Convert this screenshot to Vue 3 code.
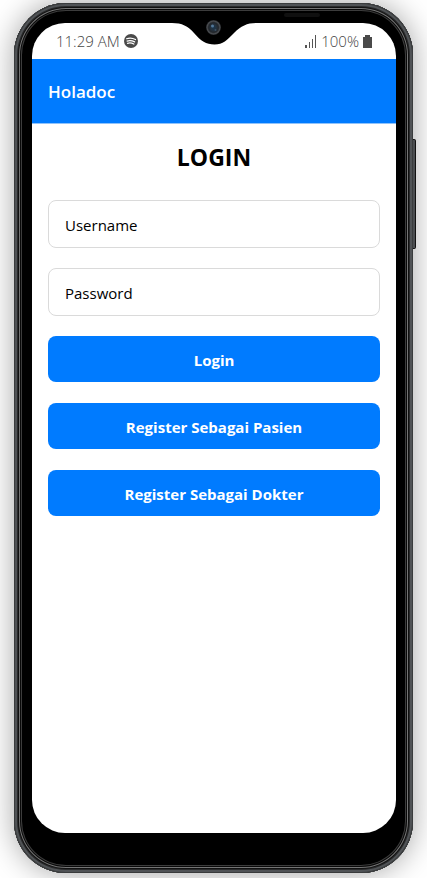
<script setup>
import { ref } from 'vue'

const username = ref('')
const password = ref('')
</script>

<template>
  <div class="stage">
    <div class="phone">
      <span class="side-key"></span>
      <span class="speaker"></span>
      <svg class="notch" viewBox="0 0 84 36" aria-hidden="true">
        <defs>
          <radialGradient id="lens">
            <stop offset="0" stop-color="#16334d" />
            <stop offset="0.35" stop-color="#24323f" />
            <stop offset="0.65" stop-color="#22262b" />
            <stop offset="0.85" stop-color="#4a4d51" />
            <stop offset="1" stop-color="#25272a" />
          </radialGradient>
        </defs>
        <path d="M0 10H84V13C75 13 69 16 62 23C55 30 51 34.500 42.500 34.500C34 34.500 29 31 22 23C16 16 10 13 0 13Z" fill="#000" />
        <circle cx="41.500" cy="17.500" r="7.500" fill="url(#lens)" />
        <circle cx="40.500" cy="16" r="1.500" fill="#54799a" />
        <circle cx="43.500" cy="20" r="1" fill="#3c5266" />
      </svg>
      <div class="screen">
        <div class="status">
          <div class="status-group">
            <span>11:29 AM</span>
            <svg class="spotify" viewBox="0 0 14 14" aria-hidden="true">
              <circle cx="7" cy="7" r="7" fill="#4a4a4a" />
              <path d="M2.600 4.700C5.400 3.800 8.800 4.100 11.500 5.600M3.100 7.100C5.600 6.400 8.300 6.700 10.600 7.900M3.500 9.300C5.600 8.700 7.900 9 9.800 10.100" fill="none" stroke="#fff" stroke-width="1.200" stroke-linecap="round" />
            </svg>
          </div>
          <div class="status-group">
            <svg class="signal" viewBox="0 0 12 13" aria-hidden="true">
              <path d="M0 10H2V13H0ZM4 7H5V13H4ZM7 4H8V13H7ZM10 0H11V13H10Z" fill="#555" />
            </svg>
            <span>100%</span>
            <svg class="battery" viewBox="0 0 9 13" aria-hidden="true">
              <path d="M2 0H7V2H9V13H0V2H2Z" fill="#4a4a4a" />
            </svg>
          </div>
        </div>
        <header class="bar">Holadoc</header>
        <form class="form" @submit.prevent>
          <h1>LOGIN</h1>
          <div class="fields">
            <input v-model="username" type="text" placeholder="Username" aria-label="Username" />
            <input v-model="password" type="password" placeholder="Password" aria-label="Password" />
          </div>
          <div class="actions">
            <button type="submit">Login</button>
            <button type="button">Register Sebagai Pasien</button>
            <button type="button">Register Sebagai Dokter</button>
          </div>
        </form>
      </div>
    </div>
  </div>
</template>

<style>
body {
  background: #fff;
}
</style>

<style scoped>
.stage {
  box-sizing: border-box;
  min-height: 100vh;
  margin-right: 3px;
  padding: 3px 14px 5px;
  overflow: hidden;
  background: #fff;
  font-family: "Segoe UI", "Open Sans", "Noto Sans", sans-serif;
}

.phone {
  position: relative;
  box-sizing: border-box;
  display: flex;
  min-height: calc(100vh - 8px);
  padding: 20px 17px 40px 18px;
  border-radius: 52px;
  background: #000;
  box-shadow:
    inset 0 0 0 1px #3a3c3d,
    inset 0 0 0 3px #505356,
    inset 0 0 0 4px #2a2b2c,
    inset 0 0 0 5px #111,
    inset 0 0 0 6px #747474,
    inset 0 0 0 7px #090909,
    inset 0 0 0 8px #3c3c3c,
    0 0 30px rgba(0, 0, 0, 0.36);
}

.side-key {
  position: absolute;
  top: 136px;
  right: -3px;
  width: 3px;
  height: 110px;
  box-sizing: border-box;
  border: 1px solid #111;
  border-left: 0;
  border-radius: 0 2px 2px 0;
  background: #4b4d50;
}

.speaker {
  position: absolute;
  top: 10px;
  right: 93px;
  width: 36px;
  height: 4px;
  border-radius: 2px;
  background: #101010;
}

.notch {
  position: absolute;
  top: 7px;
  left: 50%;
  width: 84px;
  height: 36px;
  margin-left: -42px;
}

.screen {
  flex: 1;
  min-width: 0;
  overflow: hidden;
  border-radius: 33px;
  background: #fff;
}

.status {
  display: flex;
  align-items: center;
  justify-content: space-between;
  height: 36px;
  padding: 0 24px;
  color: #444;
  font-size: 15px;
  font-weight: 300;
}

.status-group {
  display: flex;
  align-items: center;
  gap: 4px;
}

.spotify {
  width: 14px;
  height: 14px;
}

.signal {
  width: 12px;
  height: 13px;
}

.battery {
  width: 9px;
  height: 13px;
}

.bar {
  display: flex;
  align-items: center;
  height: 64px;
  padding: 0 16px;
  border-bottom: 1px solid #8fc3fb;
  background: #007bff;
  color: #fff;
  font-size: 17px;
  font-weight: 600;
}

.form {
  padding: 16px;
}

h1 {
  margin: 0 0 26px;
  color: #000;
  font-size: 23px;
  font-weight: 700;
  line-height: 34px;
  text-align: center;
}

.fields,
.actions {
  display: flex;
  flex-direction: column;
}

.fields {
  gap: 20px;
  margin-bottom: 20px;
}

.actions {
  gap: 21px;
}

input {
  box-sizing: border-box;
  width: 100%;
  height: 48px;
  padding: 2px 16px 0;
  border: 1px solid #dadada;
  border-radius: 8px;
  background: #fff;
  color: #000;
  font-family: inherit;
  font-size: 15px;
}

input::placeholder {
  color: #000;
  opacity: 1;
}

button {
  height: 46px;
  padding: 2px 16px 0;
  border: 0;
  border-radius: 8px;
  background: #007bff;
  color: #fff;
  font-family: inherit;
  font-size: 15px;
  font-weight: 700;
  cursor: pointer;
}
</style>
